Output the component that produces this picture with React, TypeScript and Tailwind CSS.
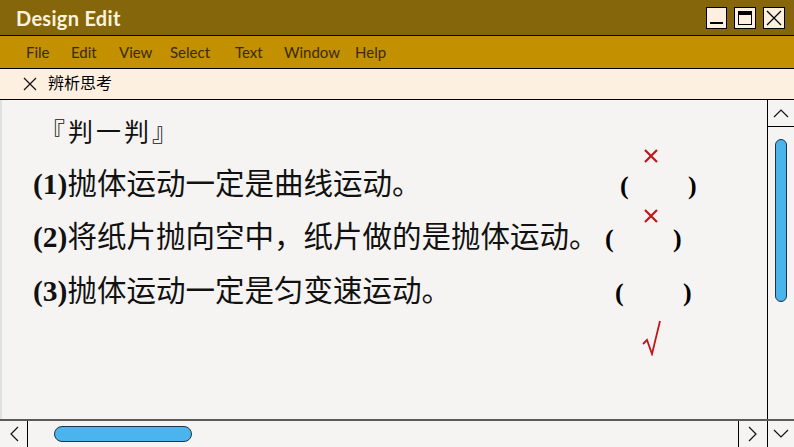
import React from "react";

const cjk = { fontFamily: '"Liberation Serif", "Noto Sans CJK SC", serif' };

function RedX() {
  return (
    <svg width="16" height="16" viewBox="0 0 16 16">
      <path d="M2 2 L14 14 M14 2 L2 14" stroke="#c0161c" strokeWidth="2.2" />
    </svg>
  );
}

export default function App() {
  return (
    <div className="w-[794px] h-[447px] overflow-hidden flex flex-col bg-[#f6f4f2]" style={{ fontFamily: '"Open Sans", sans-serif' }}>
      {/* Title bar */}
      <div className="h-[36px] bg-[#85660a] border-b-[1.5px] border-black flex items-center justify-between pl-[16px] pr-[9px]">
        <span className="text-[#fdf3dc] font-bold text-[20px] tracking-[0.3px]" style={{ fontFamily: '"Lato", sans-serif' }}>Design Edit</span>
        <div className="flex gap-[7px] items-center">
          <div className="w-[21px] h-[22px] bg-[#fdf0e0] border-[1.5px] border-black flex items-end justify-center pb-[4px]">
            <div className="w-[13px] h-[2px] bg-black" />
          </div>
          <div className="w-[22px] h-[22px] bg-[#fdf0e0] border-[1.5px] border-black flex items-center justify-center">
            <div className="w-[14px] h-[14px] border-[1.5px] border-t-[4px] border-black" />
          </div>
          <div className="w-[22px] h-[22px] bg-[#fdf0e0] border-[1.5px] border-black flex items-center justify-center">
            <svg width="16" height="16" viewBox="0 0 16 16"><path d="M1 1 L15 15 M15 1 L1 15" stroke="#000" strokeWidth="1.3" /></svg>
          </div>
        </div>
      </div>
      {/* Menu bar */}
      <div className="h-[33px] bg-[#c39000] border-b-[1.5px] border-black flex items-center text-[15px] text-[#3a2a06] pl-[26px]" style={{ fontFamily: '"Lato", sans-serif' }}>
        <span className="w-[45px]">File</span>
        <span className="w-[48px]">Edit</span>
        <span className="w-[51px]">View</span>
        <span className="w-[65px]">Select</span>
        <span className="w-[49px]">Text</span>
        <span className="w-[71px]">Window</span>
        <span>Help</span>
      </div>
      {/* Tab bar */}
      <div className="h-[31px] bg-[#fdf0e0] border-b-[1.5px] border-black flex items-center">
        <svg className="ml-[23px]" width="14" height="14" viewBox="0 0 14 14"><path d="M1 1 L13 13 M13 1 L1 13" stroke="#111" strokeWidth="1.2" /></svg>
        <span className="ml-[11px] text-[16px] text-black" style={cjk}>辨析思考</span>
      </div>
      {/* Content row */}
      <div className="flex-1 flex min-h-0">
        <div className="flex-1 relative border-l-2 border-[#dde3dc]">
          <div className="absolute left-[38px] top-[20px] text-[25px] tracking-[3px] text-[#111] leading-none" style={cjk}>『判一判』</div>
          <div className="absolute left-[31px] top-[70px] text-[29.5px] text-[#111] leading-none whitespace-nowrap" style={cjk}><b>(1)</b>抛体运动一定是曲线运动。</div>
          <div className="absolute left-[31px] top-[123px] text-[29.5px] text-[#111] leading-none whitespace-nowrap" style={cjk}><b>(2)</b>将纸片抛向空中，纸片做的是抛体运动。</div>
          <div className="absolute left-[31px] top-[177px] text-[29.5px] text-[#111] leading-none whitespace-nowrap" style={cjk}><b>(3)</b>抛体运动一定是匀变速运动。</div>
          <span className="absolute left-[618px] top-[73px] text-[26px] font-bold leading-none" style={cjk}>(</span>
          <span className="absolute left-[686px] top-[73px] text-[26px] font-bold leading-none" style={cjk}>)</span>
          <span className="absolute left-[603px] top-[126px] text-[26px] font-bold leading-none" style={cjk}>(</span>
          <span className="absolute left-[671px] top-[126px] text-[26px] font-bold leading-none" style={cjk}>)</span>
          <span className="absolute left-[613px] top-[180px] text-[26px] font-bold leading-none" style={cjk}>(</span>
          <span className="absolute left-[681px] top-[180px] text-[26px] font-bold leading-none" style={cjk}>)</span>
          <div className="absolute left-[641px] top-[48px]"><RedX /></div>
          <div className="absolute left-[641px] top-[108px]"><RedX /></div>
          <div className="absolute left-[640px] top-[220px]">
            <svg width="20" height="36" viewBox="0 0 20 36">
              <path d="M1 24 L5 20 L10 34 L18 1" stroke="#c0161c" strokeWidth="1.8" fill="none" />
            </svg>
          </div>
        </div>
        {/* Vertical scrollbar */}
        <div className="w-[27px] border-l-[1.5px] border-black flex flex-col items-center">
          <div className="w-full h-[27px] border-b-[1.5px] border-black flex items-center justify-center">
            <svg width="16" height="10" viewBox="0 0 16 10"><path d="M1 9 L8 2 L15 9" stroke="#111" strokeWidth="1.2" fill="none" /></svg>
          </div>
          <div className="mt-[12px] w-[12px] h-[163px] rounded-full bg-[#4bb4ec] border-[1.5px] border-[#1d3548]" />
        </div>
      </div>
      {/* Horizontal scrollbar */}
      <div className="h-[28px] border-t-2 border-[#5a5a5a] flex">
        <div className="w-[28px] border-r-[1.5px] border-black flex items-center justify-center">
          <svg width="10" height="16" viewBox="0 0 10 16"><path d="M9 1 L2 8 L9 15" stroke="#111" strokeWidth="1.2" fill="none" /></svg>
        </div>
        <div className="flex-1 flex items-center">
          <div className="ml-[26px] w-[138px] h-[16px] rounded-full bg-[#4bb4ec] border-[1.5px] border-[#1d3548]" />
        </div>
        <div className="w-[29px] border-l-[1.5px] border-black flex items-center justify-center">
          <svg width="10" height="16" viewBox="0 0 10 16"><path d="M1 1 L8 8 L1 15" stroke="#111" strokeWidth="1.2" fill="none" /></svg>
        </div>
        <div className="w-[27px] border-l-[1.5px] border-black flex items-center justify-center">
          <svg width="16" height="10" viewBox="0 0 16 10"><path d="M1 1 L8 8 L15 1" stroke="#111" strokeWidth="1.2" fill="none" /></svg>
        </div>
      </div>
    </div>
  );
}
